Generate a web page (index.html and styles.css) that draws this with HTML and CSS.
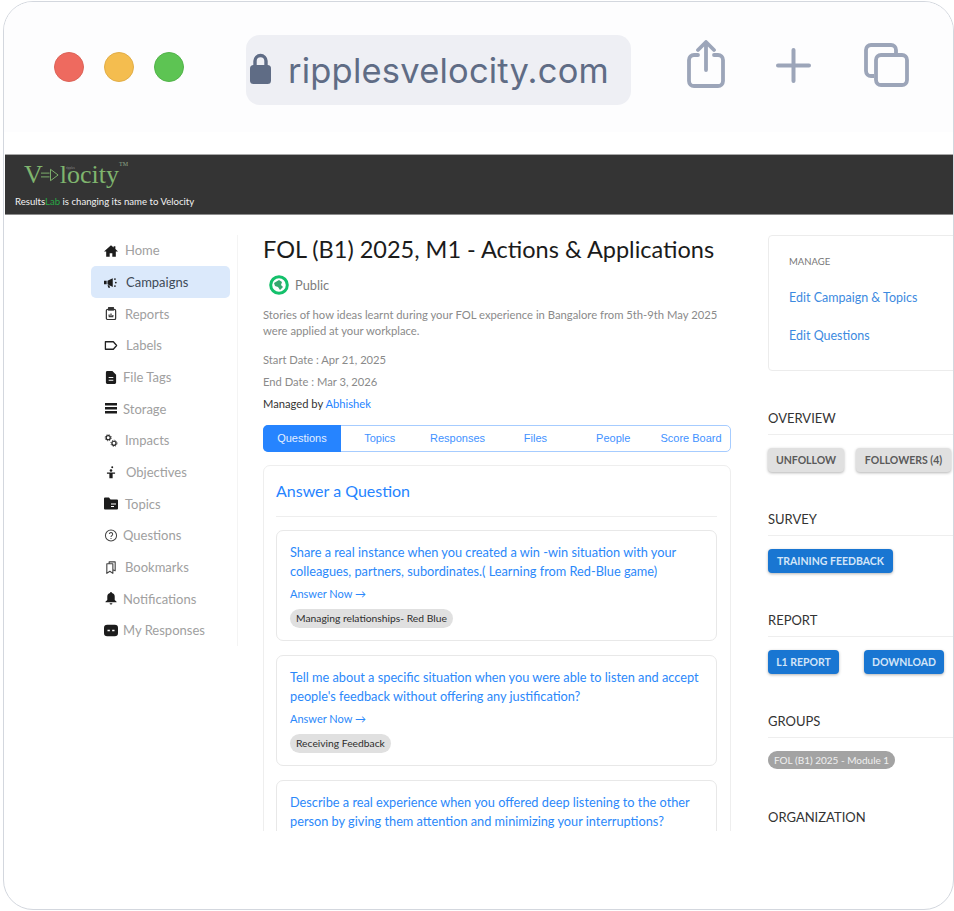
FILE: index.html
```html
<!DOCTYPE html>
<html lang="en">
<head>
  <meta charset="UTF-8" />
  <meta name="viewport" content="width=device-width, initial-scale=1.0"/>
  <title>ripplesvelocity.com</title>
  <link rel="stylesheet" href="styles.css">
</head>
<body>
  <div class="browser-frame">
    <div class="toolbar">
      <span class="dot dot-red"></span>
      <span class="dot dot-yellow"></span>
      <span class="dot dot-green"></span>
      <div class="url-bar">
        <svg class="lock" viewBox="0 0 21 31"><path d="M5 14V8a5.500 5.500 0 0 1 11 0v6" fill="none" stroke="#5f6c85" stroke-width="3.400"/><rect x="0" y="12" width="21" height="19" rx="3.500" fill="#5f6c85"/></svg>
        <span class="url-text">ripplesvelocity.com</span>
      </div>
      <svg class="tool-share" viewBox="0 0 38 48" fill="none" stroke="#9ca5b9" stroke-width="3.800" stroke-linecap="round" stroke-linejoin="round"><path d="M11 15H7a5 5 0 0 0-5 5v21a5 5 0 0 0 5 5h24a5 5 0 0 0 5-5V20a5 5 0 0 0-5-5h-4"/><path d="M19 30V3M11 10l8-8 8 8"/></svg>
      <svg class="tool-plus" viewBox="0 0 35 35" fill="none" stroke="#9ca5b9" stroke-width="4" stroke-linecap="round"><path d="M17.500 2v31M2 17.500h31"/></svg>
      <svg class="tool-copy" viewBox="0 0 45 44" fill="none" stroke="#9ca5b9" stroke-width="3.800" stroke-linejoin="round"><path d="M10 33H7a5 5 0 0 1-5-5V7a5 5 0 0 1 5-5h20a5 5 0 0 1 5 5v5"/><rect x="12" y="12" width="31" height="30" rx="5"/></svg>
    </div>

    <div class="site-header">
      <div class="logo">
        <span class="logo-v">V</span>
        <svg class="logo-arrow" viewBox="0 0 20 14" fill="none" stroke="#7fb56e" stroke-width="1"><path d="M0 5h9M0 9h9M10 1l8 6-8 6z"/></svg>
        <span class="logo-rest">l<span class="logo-o">o<span class="logo-ripples">ripples</span></span>city</span>
        <span class="logo-tm">TM</span>
      </div>
      <div class="tagline">Results<span class="tagline-lab">Lab</span> is changing its name to Velocity</div>
    </div>

    <div class="page">
      <nav class="sidebar">
        <a class="nav-item">
          <svg class="nav-icon w20" viewBox="0 0 16 14"><path d="M8 1 0 8h2.500v6h4v-4h3v4h4V8H16l-3-2.600V2h-2v1.700z"/></svg>Home
        </a>
        <a class="nav-item active">
          <svg class="nav-icon w21" viewBox="0 0 16 14"><path d="M0 5h3v4H0zM4 5l6-3v10L4 9zM4 10h2l1 3H5z"/><circle cx="12.500" cy="3" r="1"/><circle cx="13.500" cy="7" r="1"/><circle cx="12.500" cy="11" r="1"/></svg>Campaigns
        </a>
        <a class="nav-item">
          <svg class="nav-icon line w20" viewBox="0 0 12 14" stroke="#333" stroke-width="1.300"><rect x="1" y="2.500" width="10" height="11" rx="1.500"/><rect x="3.500" y="0.700" width="5" height="2.600" fill="#333"/><path d="M3.500 10.500h5M4 8v2M6 7v3M8 8.500V10"/></svg>Reports
        </a>
        <a class="nav-item">
          <svg class="nav-icon line w21" viewBox="0 0 15 12" stroke="#222" stroke-width="1.400"><path d="M1.500 2h8.500l3.500 4-3.500 4H1.500z" stroke-linejoin="round"/></svg>Labels
        </a>
        <a class="nav-item">
          <svg class="nav-icon w18" viewBox="0 0 11 14"><path d="M0 1.500A1.500 1.500 0 0 1 1.500 0H7l4 4v8.500a1.500 1.500 0 0 1-1.500 1.500h-8A1.500 1.500 0 0 1 0 12.500z"/><path d="M3 7h5M3 10h5" stroke="#fff"/></svg>File Tags
        </a>
        <a class="nav-item">
          <svg class="nav-icon w18" viewBox="0 0 14 11"><path d="M1 0h12v2.500H1zM1 4h12v2.500H1zM1 8h12v2.500H1z"/></svg>Storage
        </a>
        <a class="nav-item">
          <svg class="nav-icon line w20" viewBox="0 0 14 14" stroke="#222"><circle cx="4" cy="4" r="2.200" stroke-width="1.300"/><circle cx="10.200" cy="10" r="2.200" stroke-width="1.300"/><circle cx="4" cy="4" r="3.300" stroke-width="0.900" stroke-dasharray="1.300 1.300"/><circle cx="10.200" cy="10" r="3.300" stroke-width="0.900" stroke-dasharray="1.300 1.300"/></svg>Impacts
        </a>
        <a class="nav-item">
          <svg class="nav-icon w21" viewBox="0 0 14 16"><circle cx="8.500" cy="1.500" r="1.200"/><circle cx="7" cy="5.500" r="1.600"/><path d="M2 8h10v1.500H2zM5 9.500h4V15H5z"/></svg>Objectives
        </a>
        <a class="nav-item">
          <svg class="nav-icon w20" viewBox="0 0 14 12"><path d="M0 1a1 1 0 0 1 1-1h4l1.500 2H13a1 1 0 0 1 1 1v8a1 1 0 0 1-1 1H1a1 1 0 0 1-1-1z"/><path d="M7 6.500h5M7 9h3" stroke="#fff"/></svg>Topics
        </a>
        <a class="nav-item">
          <svg class="nav-icon line w18" viewBox="0 0 14 14" stroke="#444" stroke-width="1.100"><circle cx="7" cy="7" r="6"/><path d="M5.200 5.500a1.800 1.800 0 1 1 2.700 1.600c-.6.400-.9.700-.9 1.400M7 9.700v1.200"/></svg>Questions
        </a>
        <a class="nav-item">
          <svg class="nav-icon line w20" viewBox="0 0 12 14" stroke="#444" stroke-width="1.200" stroke-linejoin="round"><path d="M1.500 3h6.500v10.300L4.750 11 1.500 13.300zM4 3V1h6.500v9.500L8 9.500"/></svg>Bookmarks
        </a>
        <a class="nav-item">
          <svg class="nav-icon w18" viewBox="0 0 12 14"><path d="M6 0a1 1 0 0 1 1 1.100A4 4 0 0 1 10 5v3.500l2 2v.5H0v-.5l2-2V5a4 4 0 0 1 3-3.900A1 1 0 0 1 6 0zM4.500 12h3a1.500 1.500 0 0 1-3 0z"/></svg>Notifications
        </a>
        <a class="nav-item">
          <svg class="nav-icon w18" viewBox="0 0 12 10"><rect width="12" height="10" rx="2.800"/><path d="M3 5h2M7 5h2" stroke="#fff" stroke-width="1.200"/></svg>My Responses
        </a>
      </nav>

      <main class="main">
        <h1 class="title">FOL (B1) 2025, M1 - Actions &amp; Applications</h1>
        <div class="visibility">
          <svg class="public-icon" viewBox="0 0 20 20"><circle cx="10" cy="10" r="8.300" fill="#fff" stroke="#14c06b" stroke-width="3"/><path d="M5 8l5-3 3 2-1 3 2 2-3 3-2-3-3-1z" fill="#35a86e"/></svg>
          <span>Public</span>
        </div>
        <p class="description">Stories of how ideas learnt during your FOL experience in Bangalore from 5th-9th May 2025 were applied at your workplace.</p>
        <div class="meta-row">Start Date : Apr 21, 2025</div>
        <div class="meta-row">End Date : Mar 3, 2026</div>
        <div class="meta-row managed">Managed by <a class="manager">Abhishek</a></div>

        <div class="tabs">
          <span class="tab active">Questions</span>
          <span class="tab">Topics</span>
          <span class="tab">Responses</span>
          <span class="tab">Files</span>
          <span class="tab">People</span>
          <span class="tab">Score Board</span>
        </div>

        <section class="answer-card">
          <h2 class="answer-heading">Answer a Question</h2>

          <div class="question">
            <p class="question-text">Share a real instance when you created a win -win situation with your colleagues, partners, subordinates.( Learning from Red-Blue game)</p>
            <div class="answer-now">Answer Now →</div>
            <span class="topic-pill">Managing relationships- Red Blue</span>
          </div>

          <div class="question">
            <p class="question-text">Tell me about a specific situation when you were able to listen and accept people's feedback without offering any justification?</p>
            <div class="answer-now">Answer Now →</div>
            <span class="topic-pill">Receiving Feedback</span>
          </div>

          <div class="question">
            <p class="question-text">Describe a real experience when you offered deep listening to the other person by giving them attention and minimizing your interruptions?</p>
          </div>
        </section>
      </main>

      <aside class="rail">
        <div class="manage-card">
          <div class="manage-label">MANAGE</div>
          <a class="manage-link">Edit Campaign &amp; Topics</a>
          <a class="manage-link">Edit Questions</a>
        </div>

        <h3 class="rail-heading">OVERVIEW</h3>
        <div class="rail-buttons">
          <span class="btn btn-grey btn-unfollow">UNFOLLOW</span>
          <span class="btn btn-grey btn-followers">FOLLOWERS (4)</span>
        </div>

        <h3 class="rail-heading">SURVEY</h3>
        <div class="rail-buttons">
          <span class="btn btn-blue btn-training">TRAINING FEEDBACK</span>
        </div>

        <h3 class="rail-heading">REPORT</h3>
        <div class="rail-buttons">
          <span class="btn btn-blue btn-l1">L1 REPORT</span>
          <span class="btn btn-blue btn-download">DOWNLOAD</span>
        </div>

        <h3 class="rail-heading">GROUPS</h3>
        <div class="rail-buttons">
          <span class="group-pill">FOL (B1) 2025 - Module 1</span>
        </div>

        <h3 class="rail-heading org-heading">ORGANIZATION</h3>
      </aside>
    </div>
  </div>
</body>
</html>
```

FILE: styles.css
```css
html, body {
  margin: 0;
  height: 100%;
  background-color: #ffffff;
  overflow: hidden;
}

body {
  font-family: "Lato", "Liberation Sans", sans-serif;
}

.browser-frame {
  box-sizing: border-box;
  width: 951px;
  height: 909px;
  margin: 1px 0 0 3px;
  border: 1px solid #d3d7de;
  border-radius: 30px;
  overflow: hidden;
  background-color: #ffffff;
}

/* browser chrome */
.toolbar {
  display: flex;
  align-items: center;
  height: 130px;
  margin-bottom: 22px;
  padding-left: 50px;
  background-color: #fdfdfe;
}

.dot {
  flex: none;
  width: 28px;
  height: 28px;
  margin-right: 20px;
  border-radius: 50%;
  border: 1px solid transparent;
}

.dot-red { background-color: #ee6a5f; border-color: #dc6459; }
.dot-yellow { background-color: #f4bd4f; border-color: #e2ae48; }
.dot-green { background-color: #5dc453; border-color: #52b44a; }

.url-bar {
  display: flex;
  flex: none;
  align-items: center;
  box-sizing: border-box;
  width: 385px;
  height: 70px;
  margin: 6px 0 0 42px;
  padding-left: 4px;
  background-color: #eeeff4;
  border-radius: 14px;
}

.lock {
  width: 21px;
  height: 31px;
  margin-top: -4px;
}

.url-text {
  margin-left: 17px;
  margin-top: 1px;
  font-family: "Inter", sans-serif;
  font-size: 34.500px;
  letter-spacing: 0.2px;
  color: #5f6c85;
}

.tool-share { flex: none; width: 38px; height: 48px; margin-left: 56px; margin-top: -7px; }
.tool-plus { flex: none; width: 35px; height: 35px; margin-left: 51px; margin-top: -4px; }
.tool-copy { flex: none; width: 45px; height: 44px; margin-left: 53px; margin-top: -4px; }

/* site header */
.site-header {
  box-sizing: border-box;
  height: 61px;
  margin-left: 1px;
  padding: 5px 0 0 10px;
  background-color: #343434;
  border-top: 1px solid #a8a8a8;
  border-bottom: 1px solid #8c8c8c;
}

.logo {
  display: flex;
  align-items: center;
  height: 29px;
  margin-left: 9px;
  font-family: "Liberation Serif", serif;
  font-size: 26px;
  line-height: 20px;
  color: #7fb56e;
}

.logo-arrow {
  width: 19px;
  height: 14px;
  margin: 0 0 0 -2px;
}

.logo-o { position: relative; }

.logo-ripples {
  position: absolute;
  top: 6px;
  left: -1px;
  font-family: "Lato", sans-serif;
  font-size: 3px;
  line-height: 4px;
  color: #8a8a8a;
}

.logo-tm {
  align-self: flex-start;
  margin-left: 0;
  font-size: 6px;
  line-height: 8px;
  color: #8fa888;
}

.tagline {
  margin-top: 7px;
  font-size: 9.600px;
  font-weight: 400;
  line-height: 12px;
  color: #f2f2f2;
}

.tagline-lab { color: #27a844; }

/* page columns */
.page {
  display: flex;
  box-sizing: border-box;
  height: 616px;
  margin-left: 1px;
  padding-top: 20px;
  overflow: hidden;
}

.sidebar {
  flex: none;
  align-self: flex-start;
  box-sizing: border-box;
  width: 147px;
  margin: -0.400px 0 0 86px;
  padding-right: 7px;
  border-right: 1px solid #f4f4f4;
}

.nav-item {
  display: flex;
  align-items: center;
  box-sizing: border-box;
  height: 31.670px;
  padding-left: 13px;
  font-size: 13px;
  color: #a0a0a0;
  border-radius: 5px;
}

.nav-item.active {
  background-color: #dbe9fb;
  color: #3e4a57;
}

.nav-icon {
  flex: none;
  height: 13px;
  fill: #1c1c1c;
}

.nav-icon.line { fill: none; }

.w18 { width: 14px; margin-right: 5px; }
.w20 { width: 14px; margin-right: 7px; }
.w21 { width: 14px; margin-right: 8px; }

/* main column */
.main {
  flex: none;
  width: 468px;
  margin-left: 25px;
}

.title {
  margin: -1px 0 0;
  font-size: 23.500px;
  font-weight: 400;
  line-height: 30px;
  color: #1b1b1b;
}

.visibility {
  display: flex;
  align-items: center;
  height: 24px;
  margin-top: 9px;
  padding-left: 6px;
  font-size: 12.800px;
  color: #7c7c7c;
}

.public-icon {
  width: 20px;
  height: 20px;
  margin-right: 6px;
}

.description {
  margin: 10px 0 10px;
  font-size: 11.250px;
  line-height: 16px;
  color: #8a8a8a;
}

.meta-row {
  font-size: 11.200px;
  line-height: 22px;
  color: #8a8a8a;
}

.managed { color: #333; }

.manager { color: #2684ff; }

.tabs {
  display: flex;
  box-sizing: border-box;
  height: 27px;
  margin-top: 10px;
  border: 1px solid #a6ccff;
  border-radius: 5px;
}

.tab {
  flex: 1;
  font-family: "Liberation Sans", sans-serif;
  font-size: 11px;
  line-height: 25px;
  text-align: center;
  white-space: nowrap;
  color: #3f92ff;
}

.tab.active {
  margin: -1px 0 -1px -1px;
  line-height: 27px;
  color: #e4efff;
  background-color: #2684ff;
  border-radius: 5px 0 0 5px;
}

.answer-card {
  margin-top: 13px;
  padding: 15px 13px 0 12px;
  border: 1px solid #eeeeee;
  border-radius: 7px;
}

.answer-heading {
  margin: 0 0 13px;
  padding-bottom: 15px;
  font-size: 16px;
  font-weight: 400;
  line-height: 20px;
  color: #2684ff;
  border-bottom: 1px solid #eeeeee;
}

.question {
  margin-bottom: 14px;
  padding: 12px 13px 12px;
  border: 1px solid #e8e8e8;
  border-radius: 7px;
}

.question-text {
  margin: 0;
  font-size: 12.750px;
  line-height: 19px;
  color: #2b88fa;
}

.answer-now {
  margin-top: 4px;
  font-size: 11px;
  line-height: 18px;
  color: #2b88fa;
}

.topic-pill {
  display: inline-block;
  margin-top: 6px;
  padding: 0 6px;
  font-size: 10.300px;
  line-height: 19px;
  color: #2e2e2e;
  background-color: #e0e0e0;
  border-radius: 10px;
}

/* right rail */
.rail {
  flex: none;
  width: 230px;
  margin-left: 37px;
}

.manage-card {
  box-sizing: border-box;
  height: 136px;
  padding: 19px 20px 0;
  border: 1px solid #ececec;
  border-radius: 4px;
}

.manage-label {
  font-size: 9.500px;
  line-height: 14px;
  color: #777;
}

.manage-link {
  display: block;
  margin-top: 18px;
  font-size: 12.500px;
  line-height: 20px;
  color: #3d8ae0;
}

.manage-label + .manage-link { margin-top: 19px; }

.rail-heading {
  width: 186px;
  margin: 38px 0 0;
  padding-bottom: 7px;
  font-size: 13px;
  font-weight: 400;
  line-height: 18px;
  color: #333;
  border-bottom: 1px solid #eeeeee;
}

.org-heading {
  margin-top: 39px;
  border-bottom: none;
}

.rail-buttons {
  display: flex;
  margin-top: 13px;
  white-space: nowrap;
}

.btn {
  box-sizing: border-box;
  height: 24px;
  font-size: 10.500px;
  font-weight: 700;
  line-height: 24px;
  text-align: center;
  border-radius: 4px;
  box-shadow: 0 1px 3px rgba(0, 0, 0, 0.3);
}

.btn-grey {
  color: #5a5a5a;
  background-color: #e0e0e0;
}

.btn-blue {
  color: #d3e5f8;
  background-color: #1976d2;
}

.btn-unfollow { width: 76px; margin-right: 12px; }
.btn-followers { width: 95px; }
.btn-training { width: 125px; }
.btn-l1 { width: 71px; margin-right: 25px; }
.btn-download { width: 80px; }

.group-pill {
  padding: 0 6px;
  font-size: 10px;
  line-height: 18px;
  color: #f0f0f0;
  background-color: #a3a3a3;
  border-radius: 9px;
}
```
